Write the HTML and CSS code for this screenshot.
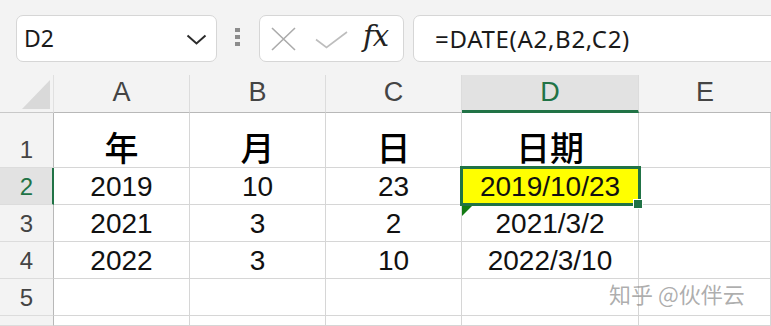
FILE: index.html
```html
<!DOCTYPE html>
<html lang="zh">
<head>
<meta charset="utf-8">
<link rel="stylesheet" href="styles.css">
</head>
<body>
<div class="app">
  <div class="toolbar">
    <div class="namebox">
      <span class="name">D2</span>
      <svg class="chev" width="21" height="11" viewBox="0 0 21 11"><polyline points="1.5,1.5 10.5,9.5 19.5,1.5" fill="none" stroke="#2b2b2b" stroke-width="2"/></svg>
    </div>
    <div class="dots"><i></i><i></i><i></i></div>
    <div class="fxbox">
      <svg class="ico-x" width="25" height="24" viewBox="0 0 25 24"><path d="M1 1 L24 23 M24 1 L1 23" stroke="#ababab" stroke-width="1.6" fill="none"/></svg>
      <svg class="ico-ok" width="33" height="18" viewBox="0 0 33 18"><polyline points="1,8.5 11.5,16.5 32,1" fill="none" stroke="#bdbdbd" stroke-width="1.6"/></svg>
      <span class="fx">fx</span>
    </div>
    <div class="formula">=DATE(A2,B2,C2)</div>
  </div>
  <div class="sheet">
    <div class="corner"><span class="tri"></span></div>
    <div class="ch">A</div>
    <div class="ch">B</div>
    <div class="ch">C</div>
    <div class="ch sel">D</div>
    <div class="ch last">E</div>

    <div class="rh r1">1</div>
    <div class="c cjk">年</div>
    <div class="c cjk">月</div>
    <div class="c cjk">日</div>
    <div class="c cjk">日期</div>
    <div class="c"></div>

    <div class="rh sel">2</div>
    <div class="c">2019</div>
    <div class="c">10</div>
    <div class="c">23</div>
    <div class="c active"><span>2019/10/23</span><span class="selbox"></span><span class="handle"></span></div>
    <div class="c"></div>

    <div class="rh">3</div>
    <div class="c">2021</div>
    <div class="c">3</div>
    <div class="c">2</div>
    <div class="c err"><span class="errtri"></span>2021/3/2</div>
    <div class="c"></div>

    <div class="rh">4</div>
    <div class="c">2022</div>
    <div class="c">3</div>
    <div class="c">10</div>
    <div class="c">2022/3/10</div>
    <div class="c"></div>

    <div class="rh">5</div>
    <div class="c"></div>
    <div class="c"></div>
    <div class="c"></div>
    <div class="c"></div>
    <div class="c"></div>

    <div class="rh"></div>
    <div class="c"></div>
    <div class="c"></div>
    <div class="c"></div>
    <div class="c"></div>
    <div class="c"></div>
  </div>
  <div class="watermark">知乎 @伙伴云</div>
</div>
</body>
</html>
```

FILE: styles.css
```css
* { box-sizing: border-box; }
html, body { margin: 0; padding: 0; }
body {
  width: 771px;
  height: 326px;
  overflow: hidden;
  background: #f3f3f3;
  font-family: "Liberation Sans", Arial, sans-serif;
}
.app { position: relative; width: 771px; height: 326px; overflow: hidden; }

.toolbar {
  height: 75px;
  display: flex;
  align-items: flex-start;
  padding: 15px 0 0 16px;
  background: #f3f3f3;
}
.namebox {
  width: 201px;
  height: 47px;
  background: #fff;
  border: 1px solid #d6d6d6;
  border-radius: 7px;
  display: flex;
  align-items: center;
  justify-content: space-between;
  padding: 0 9px 0 7px;
}
.name {
  font-family: "Noto Sans", "Open Sans", sans-serif;
  font-size: 23px;
  color: #1a1a1a;
  line-height: 1;
  padding-bottom: 1px;
}
.chev { display: block; margin-top: 2px; }
.dots {
  width: 5px;
  margin: 13px 19px 0 18px;
  display: flex;
  flex-direction: column;
  gap: 3px;
}
.dots i { display: block; width: 5px; height: 4px; background: #8c8c8c; }
.fxbox {
  width: 145px;
  height: 47px;
  background: #fff;
  border: 1px solid #d6d6d6;
  border-radius: 7px;
  display: flex;
  align-items: center;
  padding-left: 11px;
}
.ico-x { display: block; margin-top: 0; }
.ico-ok { display: block; margin-left: 19px; margin-top: 3px; }
.fx {
  margin-left: 15px;
  font-family: "DejaVu Serif", "Liberation Serif", serif;
  font-style: italic;
  font-size: 29px;
  line-height: 1;
  color: #222;
  margin-top: -4px;
  letter-spacing: -1px;
}
.formula {
  flex: 1;
  height: 47px;
  margin-left: 9px;
  margin-right: -12px;
  background: #fff;
  border: 1px solid #d6d6d6;
  border-radius: 7px;
  display: flex;
  align-items: center;
  padding-left: 21px;
  font-family: "Noto Sans", "Open Sans", sans-serif;
  font-size: 24px;
  letter-spacing: 0.7px;
  color: #1a1a1a;
  line-height: 1;
}

.sheet {
  display: grid;
  grid-template-columns: 54px 136px 136px 136px 177px 1fr;
  grid-template-rows: 38px 55px 37px 37px 37px 37px 1fr;
  height: 251px;
  background: #fff;
}
.corner {
  background: #f3f3f3;
  border-bottom: 1px solid #c8c8c8;
  border-right: 1px solid #e0e0e0;
  position: relative;
}
.tri {
  position: absolute;
  left: 22px;
  top: 5px;
  width: 28px;
  height: 29px;
  background: #d9d9d9;
  clip-path: polygon(100% 0, 100% 100%, 0 100%);
}
.ch {
  background: #f3f3f3;
  border-right: 1px solid #dcdcdc;
  border-bottom: 1px solid #b8b8b8;
  display: flex;
  align-items: flex-end;
  justify-content: center;
  font-size: 27px;
  line-height: 1;
  color: #444;
  padding-bottom: 6px;
}
.ch.last { border-right: none; }
.ch.sel {
  background: #e2e2e2;
  color: #217346;
  border-bottom: 3px solid #217346;
  padding-bottom: 4px;
}
.rh {
  background: #f3f3f3;
  border-right: 1px solid #b8b8b8;
  border-bottom: 1px solid #dcdcdc;
  display: flex;
  align-items: flex-end;
  justify-content: center;
  font-size: 24px;
  line-height: 1;
  color: #444;
  padding-bottom: 5px;
}
.rh.sel {
  background: #e2e2e2;
  color: #217346;
  border-right: 2px solid #217346;
  padding-left: 1px;
}
.c {
  border-right: 1px solid #d6d6d6;
  border-bottom: 1px solid #d6d6d6;
  display: flex;
  align-items: flex-end;
  justify-content: center;
  font-size: 28px;
  line-height: 1;
  color: #111;
  padding-bottom: 3px;
  position: relative;
}
.c.cjk {
  font-family: "Noto Sans CJK SC", "Noto Sans CJK JP", sans-serif;
  font-weight: 500;
  color: #000;
  font-size: 34px;
  padding-bottom: 3px;
  letter-spacing: 0;
}
.c.active { background: #ffff00; }
.selbox {
  position: absolute;
  left: -2px;
  top: -2px;
  width: 181px;
  height: 40px;
  border: 3px solid #217346;
  z-index: 2;
}
.handle {
  position: absolute;
  left: 171px;
  top: 31px;
  width: 10px;
  height: 10px;
  background: #217346;
  border: 1px solid #fff;
  z-index: 3;
}
.errtri {
  position: absolute;
  left: 0;
  top: 0;
  width: 11px;
  height: 11px;
  background: #137a13;
  clip-path: polygon(0 0, 100% 0, 0 100%);
}
.watermark {
  position: absolute;
  left: 609px;
  top: 280px;
  font-family: "Noto Sans CJK SC", sans-serif;
  font-size: 22px;
  color: rgba(120, 120, 120, 0.6);
  line-height: 1.2;
  letter-spacing: 0;
}
```
